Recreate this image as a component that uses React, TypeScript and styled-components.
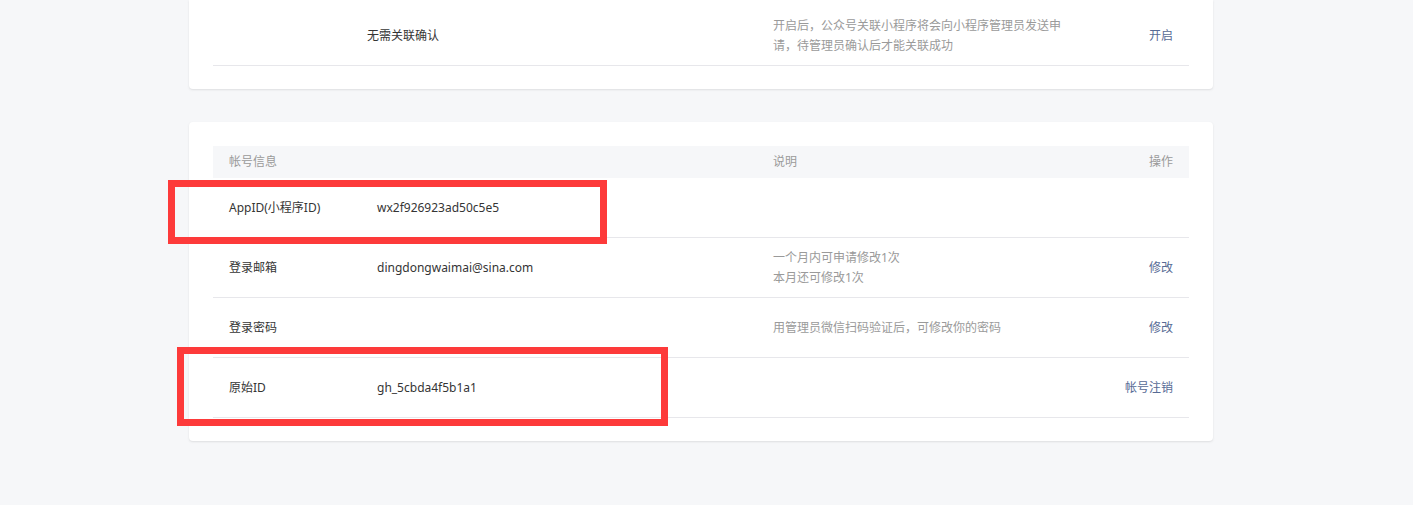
import * as React from 'react'
import styled, { createGlobalStyle } from 'styled-components'

const GlobalStyle = createGlobalStyle`
  html, body {
    margin: 0;
    padding: 0;
    background: #f6f7f9;
    font-family: "Noto Sans", "Noto Sans CJK SC", sans-serif;
    font-size: 12px;
    color: #353535;
  }
`

const Page = styled.div`
  position: relative;
  height: 505px;
  padding-left: 189px;
  display: flex;
  flex-direction: column;
  gap: 33px;
`

const Card = styled.div<{ $clipped?: boolean }>`
  width: 1024px;
  box-sizing: border-box;
  background: #fff;
  border-radius: ${p => (p.$clipped ? '0 0 4px 4px' : '4px')};
  box-shadow: 0 1px 2px rgba(150, 150, 150, 0.25);
  padding: ${p => (p.$clipped ? '6px' : '24px')} 24px 23px;
`

const Row = styled.div<{ $labelWidth?: number }>`
  display: grid;
  grid-template-columns: ${p => p.$labelWidth ?? 148}px ${p => 544 - (p.$labelWidth ?? 148)}px 300px 1fr;
  align-items: center;
  box-sizing: border-box;
  height: 60px;
  padding: 0 16px;
  border-bottom: 1px solid #e7e7eb;
  line-height: 20px;
`

const HeadRow = styled(Row)`
  height: 32px;
  background: #f6f7f9;
  border-bottom: none;
  color: #9a9a9a;
`

const Label = styled.div`
  color: #353535;
`

const Value = styled.div`
  color: #353535;
`

const Desc = styled.div`
  color: #9a9a9a;
  width: 290px;
`

const Op = styled.div`
  text-align: right;
`

const Link = styled.a`
  color: #576b95;
  text-decoration: none;
  cursor: pointer;
`

const Mark = styled.div<{ $x: number; $y: number; $w: number; $h: number }>`
  position: absolute;
  left: ${p => p.$x}px;
  top: ${p => p.$y}px;
  width: ${p => p.$w}px;
  height: ${p => p.$h}px;
  box-sizing: border-box;
  border: 7px solid #fd3a3a;
  pointer-events: none;
`

export default function App() {
  return (
    <>
      <GlobalStyle />
      <Page>
        <Card $clipped>
          <Row $labelWidth={138}>
            <Label />
            <Value>无需关联确认</Value>
            <Desc>开启后，公众号关联小程序将会向小程序管理员发送申请，待管理员确认后才能关联成功</Desc>
            <Op><Link>开启</Link></Op>
          </Row>
        </Card>
        <Card>
          <HeadRow>
            <div>帐号信息</div>
            <div />
            <div>说明</div>
            <Op>操作</Op>
          </HeadRow>
          <Row>
            <Label>AppID(小程序ID)</Label>
            <Value>wx2f926923ad50c5e5</Value>
            <Desc />
            <Op />
          </Row>
          <Row>
            <Label>登录邮箱</Label>
            <Value>dingdongwaimai@sina.com</Value>
            <Desc>一个月内可申请修改1次<br />本月还可修改1次</Desc>
            <Op><Link>修改</Link></Op>
          </Row>
          <Row>
            <Label>登录密码</Label>
            <Value />
            <Desc>用管理员微信扫码验证后，可修改你的密码</Desc>
            <Op><Link>修改</Link></Op>
          </Row>
          <Row>
            <Label>原始ID</Label>
            <Value>gh_5cbda4f5b1a1</Value>
            <Desc />
            <Op><Link>帐号注销</Link></Op>
          </Row>
        </Card>
        <Mark $x={168} $y={180} $w={439} $h={64} />
        <Mark $x={177} $y={347} $w={491} $h={79} />
      </Page>
    </>
  )
}
